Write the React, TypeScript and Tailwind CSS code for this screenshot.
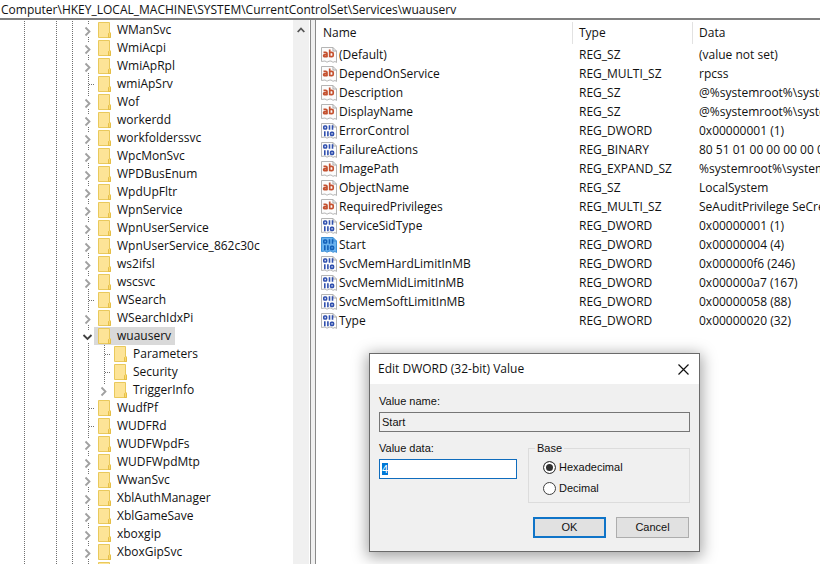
import { useEffect, useRef, useState } from "react";

type Node = { name: string; kind: "closed" | "open" | "leaf"; child?: boolean; last?: boolean };

const NODES: Node[] = [
  { name: "WManSvc", kind: "closed" },
  { name: "WmiAcpi", kind: "closed" },
  { name: "WmiApRpl", kind: "closed" },
  { name: "wmiApSrv", kind: "leaf" },
  { name: "Wof", kind: "closed" },
  { name: "workerdd", kind: "closed" },
  { name: "workfolderssvc", kind: "closed" },
  { name: "WpcMonSvc", kind: "closed" },
  { name: "WPDBusEnum", kind: "closed" },
  { name: "WpdUpFltr", kind: "closed" },
  { name: "WpnService", kind: "closed" },
  { name: "WpnUserService", kind: "closed" },
  { name: "WpnUserService_862c30c", kind: "closed" },
  { name: "ws2ifsl", kind: "closed" },
  { name: "wscsvc", kind: "closed" },
  { name: "WSearch", kind: "leaf" },
  { name: "WSearchIdxPi", kind: "closed" },
  { name: "wuauserv", kind: "open" },
  { name: "Parameters", kind: "leaf", child: true },
  { name: "Security", kind: "leaf", child: true },
  { name: "TriggerInfo", kind: "closed", child: true, last: true },
  { name: "WudfPf", kind: "leaf" },
  { name: "WUDFRd", kind: "leaf" },
  { name: "WUDFWpdFs", kind: "closed" },
  { name: "WUDFWpdMtp", kind: "closed" },
  { name: "WwanSvc", kind: "closed" },
  { name: "XblAuthManager", kind: "closed" },
  { name: "XblGameSave", kind: "closed" },
  { name: "xboxgip", kind: "closed" },
  { name: "XboxGipSvc", kind: "closed" },
  { name: "", kind: "closed" },
];

const VALUES: [string, string, string][] = [
  ["(Default)", "REG_SZ", "(value not set)"],
  ["DependOnService", "REG_MULTI_SZ", "rpcss"],
  ["Description", "REG_SZ", "@%systemroot%\\system"],
  ["DisplayName", "REG_SZ", "@%systemroot%\\system"],
  ["ErrorControl", "REG_DWORD", "0x00000001 (1)"],
  ["FailureActions", "REG_BINARY", "80 51 01 00 00 00 00 00 00"],
  ["ImagePath", "REG_EXPAND_SZ", "%systemroot%\\system"],
  ["ObjectName", "REG_SZ", "LocalSystem"],
  ["RequiredPrivileges", "REG_MULTI_SZ", "SeAuditPrivilege SeCrea"],
  ["ServiceSidType", "REG_DWORD", "0x00000001 (1)"],
  ["Start", "REG_DWORD", "0x00000004 (4)"],
  ["SvcMemHardLimitInMB", "REG_DWORD", "0x000000f6 (246)"],
  ["SvcMemMidLimitInMB", "REG_DWORD", "0x000000a7 (167)"],
  ["SvcMemSoftLimitInMB", "REG_DWORD", "0x00000058 (88)"],
  ["Type", "REG_DWORD", "0x00000020 (32)"],
];

const VDOTS = "w-px bg-[repeating-linear-gradient(to_bottom,#707070_0_1px,transparent_1px_2px)]";
const HDOTS = "h-px bg-[repeating-linear-gradient(to_right,#707070_0_1px,transparent_1px_2px)]";

function Guide({ width }: { width: string }) {
  return (
    <span className={`flex shrink-0 self-stretch ${width}`}>
      <span className={VDOTS} />
    </span>
  );
}

function Toggle({ node }: { node: Node }) {
  if (node.kind === "leaf") {
    return (
      <span className="flex w-3 shrink-0 items-center self-stretch pl-[6px]">
        <span className={`self-stretch ${VDOTS}`} />
        <span className={`flex-1 ${HDOTS}`} />
      </span>
    );
  }
  const open = node.kind === "open";
  return (
    <span className="flex w-3 shrink-0 flex-col self-stretch">
      <span className={`ml-[6px] h-[3px] ${VDOTS}`} />
      <button
        type="button"
        aria-label={`${open ? "Collapse" : "Expand"} ${node.name}`}
        className="flex flex-1 items-center justify-center"
      >
        <svg viewBox="0 0 12 12" className="size-3" fill="none" strokeWidth="1.8">
          {open ? <path d="M1.500 4l4 4 4-4" stroke="#404040" /> : <path d="M3.500 2.500l4 4-4 4" stroke="#a0a0a0" />}
        </svg>
      </button>
      <span className={`ml-[6px] h-[2px] ${node.last ? "w-px" : VDOTS}`} />
    </span>
  );
}

function Folder() {
  return (
    <svg viewBox="0 0 13 16" className="h-4 w-[13px] shrink-0">
      <path d="M.5.5h11v9.5l1 .8v4.7H.5z" fill="#fde497" stroke="#e9c95c" />
      <path d="M10.5 15.5v-4l1-1 1 1v4z" fill="#fbd96d" stroke="#dfb73e" strokeWidth=".8" />
    </svg>
  );
}

function TreeRow({ node }: { node: Node }) {
  return (
    <li className="flex h-[18px] shrink-0 items-center pl-6">
      <Guide width="w-8" />
      <Guide width="w-4" />
      {node.child && <Guide width="w-4" />}
      <Guide width="w-[10px]" />
      <Toggle node={node} />
      <span
        className={`flex h-[18px] items-center gap-[6px] pr-1 pl-1 whitespace-nowrap ${
          node.kind === "open" ? "bg-[#d9d9d9]" : ""
        }`}
      >
        <Folder />
        {node.name}
      </span>
    </li>
  );
}

function ValueIcon({ text, selected }: { text: boolean; selected: boolean }) {
  return (
    <svg viewBox="0 0 16 16" className="size-4 shrink-0" fill="none">
      <path
        d="M.5.5h11.5l3.500 3.500v11.500l-1.500-1-2 .8-2-1.300-2 .2-2 1-2-1.200-3.500.5z"
        fill={selected ? "#6bb3ef" : "#fcfcfc"}
        stroke={selected ? "#3c8fd6" : "#b5b5b5"}
      />
      <path d="M12 .5V4h3.500" stroke={selected ? "#3c8fd6" : "#a9a9a9"} />
      {text ? (
        <g stroke="#c4512f" strokeWidth="1.700">
          <path d="M2.500 5.300h2.200q1.300 0 1.300 1.200v3.800M6 7.600H4q-1.400 0-1.400 1.100T4 9.700h2" />
          <path d="M8.700 2.500v7.800M8.700 6q0-.7 1.500-.7h.6q1.400 0 1.400 1.500v1.400q0 1.500-1.400 1.500h-.6q-1.500 0-1.500-.7" />
        </g>
      ) : (
        <g stroke={selected ? "#1260b8" : "#2f4fae"} strokeWidth="1.600">
          <rect x="2.800" y="3" width="2.800" height="3" rx=".8" />
          <path d="M8.500 2.200v4.600M11.500 2.200v4.600M3.800 8.200v5M6.900 8.200v5" />
          <rect x="9.600" y="9.400" width="2.900" height="3" rx=".8" />
        </g>
      )}
    </svg>
  );
}

function ValueTable() {
  return (
    <table className="w-full table-fixed border-collapse text-left whitespace-nowrap">
      <colgroup>
        <col className="w-[256px]" />
        <col className="w-[120px]" />
        <col />
      </colgroup>
      <thead>
        <tr className="h-[25px]">
          {["Name", "Type", "Data"].map((h) => (
            <th key={h} className="p-0 align-top font-normal">
              <div
                className={`mt-[2px] flex h-[22px] items-center pl-[6px] ${
                  h === "Name" ? "ml-[1px]" : "border-l border-[#e2e2e2]"
                }`}
              >
                {h}
              </div>
            </th>
          ))}
        </tr>
      </thead>
      <tbody>
        {VALUES.map(([name, type, data]) => (
          <tr key={name} className="h-[19px]">
            <td className="p-0">
              <div className="flex h-[19px] items-center gap-[2px] pl-[5px]">
                <ValueIcon text={type.endsWith("SZ")} selected={name === "Start"} />
                {name}
              </div>
            </td>
            <td className="p-0 pl-[7px]">{type}</td>
            <td className="overflow-hidden p-0 pl-[7px]">{data}</td>
          </tr>
        ))}
      </tbody>
    </table>
  );
}

const RADIO =
  "size-[13px] appearance-none rounded-full border border-[#404040] bg-white checked:bg-[#303030] checked:shadow-[inset_0_0_0_2px_white]";

function EditDialog() {
  const input = useRef<HTMLInputElement>(null);
  const [value, setValue] = useState("4");
  const [base, setBase] = useState("Hexadecimal");
  useEffect(() => {
    input.current?.focus();
    input.current?.select();
  }, []);
  return (
    <form
      role="dialog"
      aria-labelledby="dialog-title"
      onSubmit={(e) => e.preventDefault()}
      className="absolute top-[353px] left-[369px] w-[331px] border border-[#6a6a6a] bg-[#f0f0f0] shadow-[0_3px_14px_2px_rgba(0,0,0,0.36)]"
    >
      <header className="flex h-[30px] items-center justify-between bg-white pr-2 pl-2">
        <h2 id="dialog-title">Edit DWORD (32-bit) Value</h2>
        <button type="button" aria-label="Close" className="p-[2px]">
          <svg viewBox="0 0 11 11" className="size-[11px]" stroke="#111" strokeWidth="1.200">
            <path d="M.5.5l10 10M10.500.5l-10 10" />
          </svg>
        </button>
      </header>
      <div className="px-[9px] pt-[9px] pb-[13px] font-['Liberation_Sans',Arial,sans-serif] text-[11px] leading-4">
        <label htmlFor="value-name" className="block">
          Value name:
        </label>
        <input
          id="value-name"
          readOnly
          value="Start"
          className="mt-[3px] block h-5 w-full border border-[#767676] bg-[#f0f0f0] px-[2px] outline-none"
        />
        <div className="mt-[8px] flex justify-between">
          <div className="w-[138px]">
            <label htmlFor="value-data" className="block">
              Value data:
            </label>
            <input
              id="value-data"
              ref={input}
              value={value}
              onChange={(e) => setValue(e.target.value)}
              className="mt-[3px] block h-5 w-full border border-[#0f6cbd] bg-white px-[2px] outline-none selection:bg-[#0078d7] selection:text-white"
            />
          </div>
          <fieldset className="w-[162px] border border-[#dcdcdc] px-[14px] pb-[6px]">
            <legend className="-ml-2 px-[2px]">Base</legend>
            <div className="flex flex-col gap-[5px] pt-[3px]">
              {["Hexadecimal", "Decimal"].map((b) => (
                <label key={b} className="flex items-center gap-[3px]">
                  <input type="radio" name="base" checked={base === b} onChange={() => setBase(b)} className={RADIO} />
                  {b}
                </label>
              ))}
            </div>
          </fieldset>
        </div>
        <div className="mt-[14px] flex justify-end gap-[10px] pr-px">
          <button type="submit" className="h-[21px] w-[73px] border-2 border-[#0f74c8] bg-[#e1e1e1] leading-none">
            OK
          </button>
          <button type="button" className="h-[21px] w-[73px] border border-[#adadad] bg-[#e1e1e1] leading-none">
            Cancel
          </button>
        </div>
      </div>
    </form>
  );
}

export default function App() {
  return (
    <div className="relative flex h-screen flex-col overflow-hidden bg-white font-['Open_Sans','Noto_Sans',sans-serif] text-[12px] leading-4 text-[#111]">
      <input
        aria-label="Address"
        readOnly
        value={"Computer\\HKEY_LOCAL_MACHINE\\SYSTEM\\CurrentControlSet\\Services\\wuauserv"}
        className="h-5 w-full shrink-0 border-b-2 border-[#808080] pl-[1px] outline-none"
      />
      <div className="flex min-h-0 flex-1">
        <nav aria-label="Keys" className="flex w-[311px] shrink-0 border-r border-[#8a8a8a]">
          <ul className="flex flex-1 flex-col overflow-hidden pt-[1px]">
            {NODES.map((n, i) => (
              <TreeRow key={i} node={n} />
            ))}
          </ul>
          <div className="mr-[1px] w-4 shrink-0 bg-[#f0f0f0]">
            <button type="button" aria-label="Scroll up" className="flex h-5 w-full items-center justify-center">
              <svg viewBox="0 0 8 6" className="h-[6px] w-2" fill="none" stroke="#555" strokeWidth="1.800">
                <path d="M.7 5L4 1.500 7.300 5" />
              </svg>
            </button>
          </div>
        </nav>
        <div className="w-1 shrink-0 bg-[#f0f0f0]" />
        <main className="min-w-0 flex-1 overflow-hidden border-l border-[#8a8a8a]">
          <ValueTable />
        </main>
      </div>
      <EditDialog />
    </div>
  );
}
